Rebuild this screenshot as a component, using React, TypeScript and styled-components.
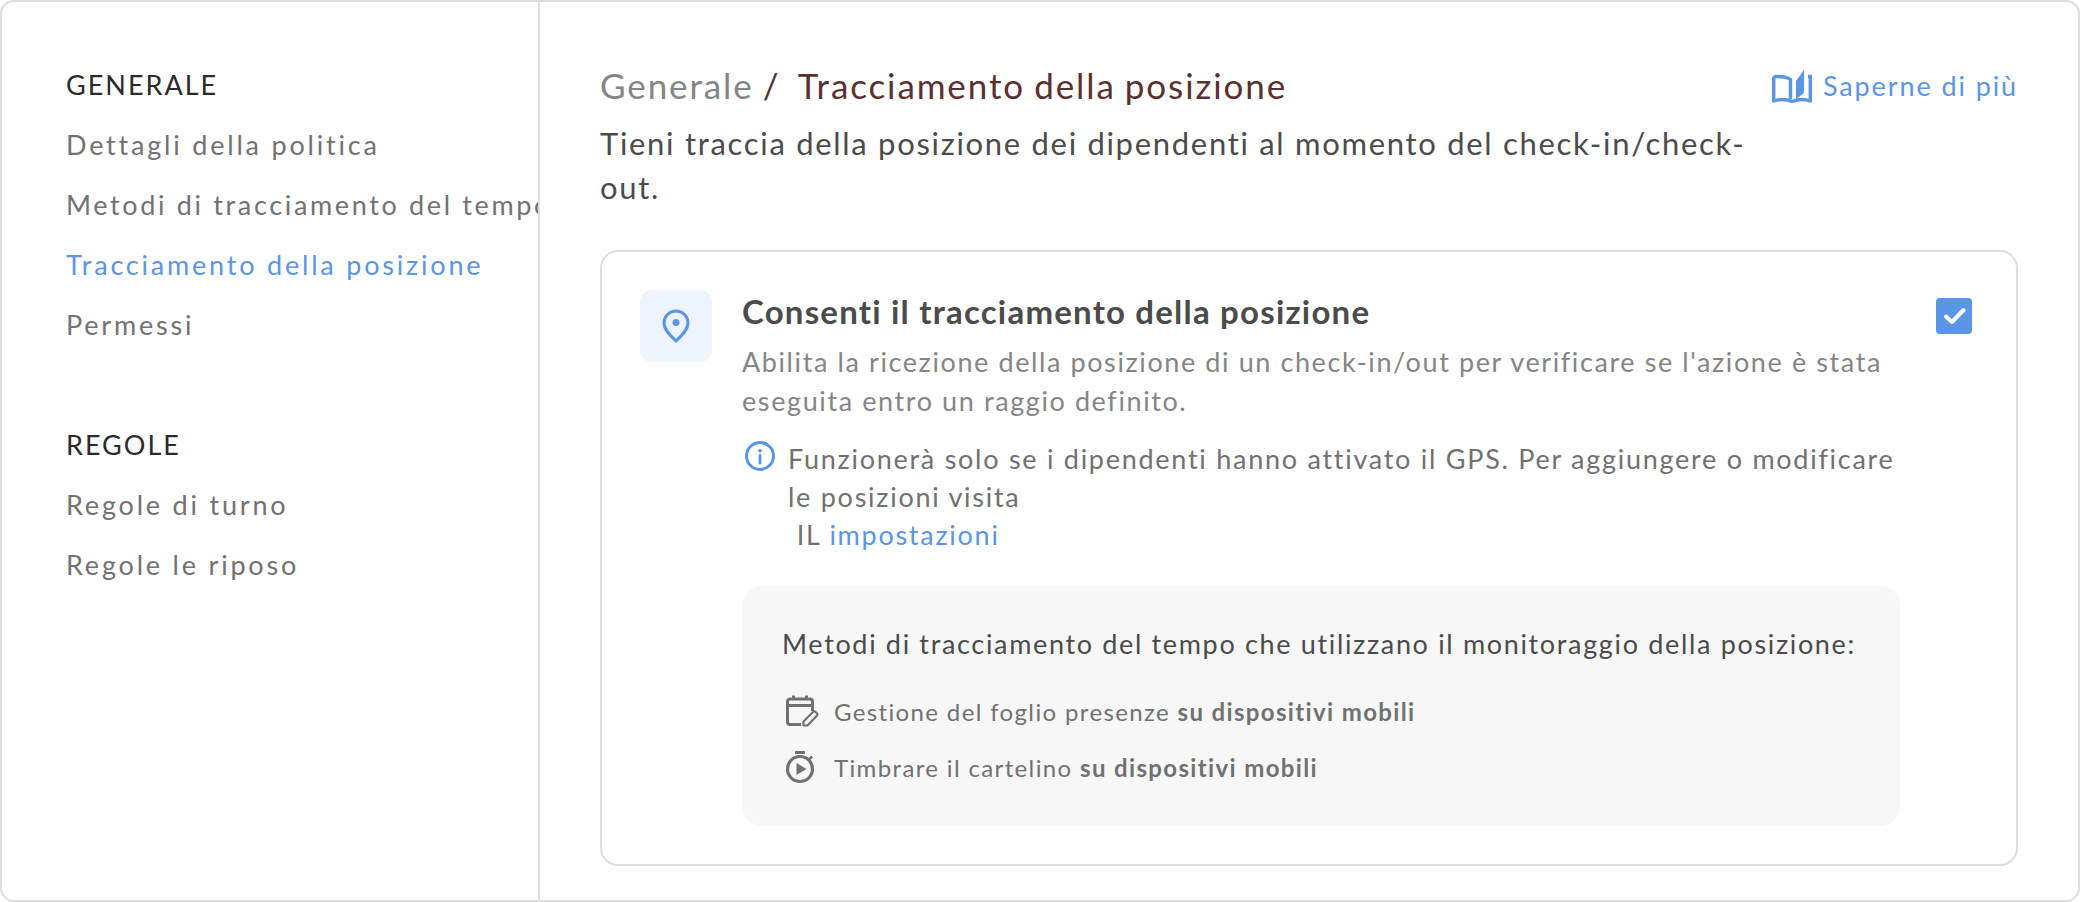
import React from "react"
import styled, { createGlobalStyle } from "styled-components"

const GlobalStyle = createGlobalStyle`
  html, body {
    margin: 0;
    padding: 0;
    background: #fff;
  }
  * {
    box-sizing: border-box;
  }
`

const Frame = styled.div`
  display: flex;
  width: 2080px;
  height: 902px;
  border: 2px solid #dedede;
  border-radius: 14px;
  background: #fff;
  font-family: "Lato", "Noto Sans", sans-serif;
  overflow: hidden;
`

const Sidebar = styled.nav`
  flex: 0 0 538px;
  height: 100%;
  padding: 66px 0 0 64px;
  border-right: 2px solid #dedede;
  overflow: hidden;
  white-space: nowrap;
`

const NavGroup = styled.div`
  display: flex;
  flex-direction: column;
  gap: 26px;
  margin-bottom: 86px;
`

const NavHeading = styled.div`
  font-size: 27px;
  line-height: 34px;
  letter-spacing: 2px;
  color: #2b2b2b;
`

const NavItem = styled.div<{ $active?: boolean; $tight?: boolean }>`
  font-size: 27px;
  line-height: 34px;
  letter-spacing: ${(p) => (p.$tight ? "2.65px" : "2.8px")};
  color: ${(p) => (p.$active ? "#5b95e6" : "#727272")};
`

const Main = styled.main`
  flex: 1;
  min-width: 0;
  padding: 60px 60px 34px 60px;
  display: flex;
  flex-direction: column;
`

const HeaderRow = styled.div`
  display: flex;
  justify-content: space-between;
  align-items: flex-start;
`

const Crumbs = styled.div`
  font-size: 35px;
  line-height: 46px;
  letter-spacing: 1.9px;
  word-spacing: -1.7px;
  color: #858585;
  white-space: pre;
`

const CrumbCurrent = styled.span`
  color: #5a3030;
`

const LearnMore = styled.a`
  display: flex;
  align-items: center;
  gap: 11px;
  margin-top: 4px;
  font-size: 27px;
  line-height: 40px;
  letter-spacing: 1.9px;
  color: #5b95e6;
`

const Description = styled.p`
  margin: 13px 0 0;
  width: 1160px;
  font-size: 31px;
  line-height: 44px;
  letter-spacing: 1.7px;
  color: #4b4b4b;
`

const Card = styled.section`
  flex: 1;
  margin-top: 41px;
  display: flex;
  padding: 38px 44px 38px 38px;
  border: 2px solid #dedede;
  border-radius: 18px;
`

const IconTile = styled.div`
  flex: 0 0 72px;
  height: 72px;
  display: flex;
  align-items: center;
  justify-content: center;
  border-radius: 12px;
  background: #edf4fd;
`

const CardBody = styled.div`
  flex: 1;
  min-width: 0;
  margin-left: 30px;
`

const TitleRow = styled.div`
  display: flex;
  justify-content: space-between;
  height: 43px;
`

const CardTitle = styled.h3`
  margin: 0;
  font-size: 33px;
  line-height: 43px;
  font-weight: 700;
  letter-spacing: 1.2px;
  color: #4b4b4b;
`

const Checkbox = styled.div`
  flex: 0 0 36px;
  height: 36px;
  margin-top: 8px;
  display: flex;
  align-items: center;
  justify-content: center;
  border-radius: 4px;
  background: #5b95e6;
`

const CardText = styled.p`
  margin: 9px 0 0;
  width: 1150px;
  font-size: 27px;
  line-height: 39px;
  letter-spacing: 1.6px;
  color: #858585;
`

const InfoRow = styled.div`
  display: flex;
  gap: 13px;
  margin: 20px 0 0 3px;
  width: 1160px;
`

const InfoText = styled.div`
  font-size: 27px;
  line-height: 38px;
  letter-spacing: 1.73px;
  color: #717171;
  width: 1120px;
  white-space: pre-wrap;
`

const InfoIconBox = styled.svg`
  flex: 0 0 30px;
  width: 30px;
  height: 30px;
  margin-top: 1px;
`

const Link = styled.span`
  color: #5b95e6;
`

const MethodsBox = styled.div`
  width: 1158px;
  margin-top: 32px;
  padding: 40px 40px 43px;
  border-radius: 20px;
  background: #f7f7f7;
`

const MethodsTitle = styled.div`
  font-size: 27px;
  line-height: 36px;
  letter-spacing: 1.66px;
  color: #4b4b4b;
`

const MethodList = styled.div`
  display: flex;
  flex-direction: column;
  gap: 24px;
  margin-top: 33px;
`

const MethodRow = styled.div`
  display: flex;
  align-items: center;
  gap: 18px;
  height: 32px;
  font-size: 24px;
  letter-spacing: 1.36px;
  color: #717171;
`

const MethodIcon = styled.svg`
  flex: 0 0 34px;
  width: 34px;
  height: 34px;
  margin-left: 3px;
  margin-right: -3px;
`

function BookIcon() {
  return (
    <svg width="40" height="33" viewBox="0 0 40 33" fill="none">
      <path d="M1.700 30V9c0-1.500 1-2.500 2.500-2.500 5.500 0 11 .5 14.300 3V29" stroke="#5b95e6" strokeWidth="3.400" strokeLinejoin="round" />
      <path d="M1.700 31c6-2 12.300-2 18.300.5 6-2.500 12.300-2.500 18.300-.5" stroke="#5b95e6" strokeWidth="3.400" strokeLinecap="round" />
      <path d="M38.300 31V6.500H36" stroke="#5b95e6" strokeWidth="3.400" />
      <path d="M24 11 32 0v23l-8 6V11Z" fill="#5b95e6" />
    </svg>
  )
}

function PinIcon() {
  return (
    <svg width="28" height="34" viewBox="0 0 28 34" fill="none">
      <path d="M14 32C9 27 2 21 2 14a12 12 0 0 1 24 0c0 7-7 13-12 18Z" stroke="#5b95e6" strokeWidth="3" strokeLinejoin="round" />
      <circle cx="14" cy="13.500" r="3.500" fill="#5b95e6" />
    </svg>
  )
}

function InfoIcon() {
  return (
    <InfoIconBox viewBox="0 0 30 30" fill="none">
      <circle cx="15" cy="15" r="13.500" stroke="#5b95e6" strokeWidth="3" />
      <circle cx="15" cy="9.800" r="1.800" fill="#5b95e6" />
      <path d="M15 14.500v7.500" stroke="#5b95e6" strokeWidth="2.800" strokeLinecap="round" />
    </InfoIconBox>
  )
}

function CheckIcon() {
  return (
    <svg width="25" height="20" viewBox="0 0 25 20" fill="none">
      <path d="M4 10.500 10 16 21.500 4" stroke="#fff" strokeWidth="4" strokeLinecap="round" strokeLinejoin="round" />
    </svg>
  )
}

function CalendarEditIcon() {
  return (
    <MethodIcon viewBox="0 0 34 34" fill="none">
      <path d="M16 30.500H5A2.500 2.500 0 0 1 2.500 28V7.500A2.500 2.500 0 0 1 5 5h20a2.500 2.500 0 0 1 2.500 2.500V17" stroke="#717171" strokeWidth="3" />
      <path d="M2.500 11.500h25M8.500 1.500V6M21.500 1.500V6" stroke="#717171" strokeWidth="3" />
      <path d="M18.500 31.500v-4l9.500-9.500a1.500 1.500 0 0 1 2.500 0l1.300 1.300a1.500 1.500 0 0 1 0 2.400L22.500 31.500h-4Z" stroke="#717171" strokeWidth="2.200" strokeLinejoin="round" />
    </MethodIcon>
  )
}

function TimerIcon() {
  return (
    <MethodIcon viewBox="0 0 34 34" fill="none">
      <circle cx="15" cy="19" r="12.500" stroke="#717171" strokeWidth="3.200" />
      <path d="M10 2.500h10" stroke="#717171" strokeWidth="3" />
      <path d="M27 6.500 24.500 9" stroke="#717171" strokeWidth="2.800" />
      <path d="M11.500 13 21.500 19 11.500 25Z" fill="#717171" />
    </MethodIcon>
  )
}

export default function App() {
  return (
    <>
      <GlobalStyle />
      <Frame>
        <Sidebar>
          <NavGroup>
            <NavHeading>GENERALE</NavHeading>
            <NavItem>Dettagli della politica</NavItem>
            <NavItem $tight>Metodi di tracciamento del tempo</NavItem>
            <NavItem $active>Tracciamento della posizione</NavItem>
            <NavItem>Permessi</NavItem>
          </NavGroup>
          <NavGroup>
            <NavHeading>REGOLE</NavHeading>
            <NavItem>Regole di turno</NavItem>
            <NavItem>Regole le riposo</NavItem>
          </NavGroup>
        </Sidebar>
        <Main>
          <HeaderRow>
            <Crumbs>
              Generale <CrumbCurrent>/  Tracciamento della posizione</CrumbCurrent>
            </Crumbs>
            <LearnMore>
              <BookIcon />
              Saperne di più
            </LearnMore>
          </HeaderRow>
          <Description>
            Tieni traccia della posizione dei dipendenti al momento del check-in/check-out.
          </Description>
          <Card>
            <IconTile>
              <PinIcon />
            </IconTile>
            <CardBody>
              <TitleRow>
                <CardTitle>Consenti il tracciamento della posizione</CardTitle>
                <Checkbox>
                  <CheckIcon />
                </Checkbox>
              </TitleRow>
              <CardText>
                Abilita la ricezione della posizione di un check-in/out per verificare se l'azione è stata eseguita entro un raggio definito.
              </CardText>
              <InfoRow>
                <InfoIcon />
                <InfoText>
                  Funzionerà solo se i dipendenti hanno attivato il GPS. Per aggiungere o modificare le posizioni visita
                  <br /> IL <Link>impostazioni</Link>
                </InfoText>
              </InfoRow>
              <MethodsBox>
                <MethodsTitle>Metodi di tracciamento del tempo che utilizzano il monitoraggio della posizione:</MethodsTitle>
                <MethodList>
                  <MethodRow>
                    <CalendarEditIcon />
                    <span>
                      Gestione del foglio presenze <b>su dispositivi mobili</b>
                    </span>
                  </MethodRow>
                  <MethodRow>
                    <TimerIcon />
                    <span>
                      Timbrare il cartelino <b>su dispositivi mobili</b>
                    </span>
                  </MethodRow>
                </MethodList>
              </MethodsBox>
            </CardBody>
          </Card>
        </Main>
      </Frame>
    </>
  )
}
